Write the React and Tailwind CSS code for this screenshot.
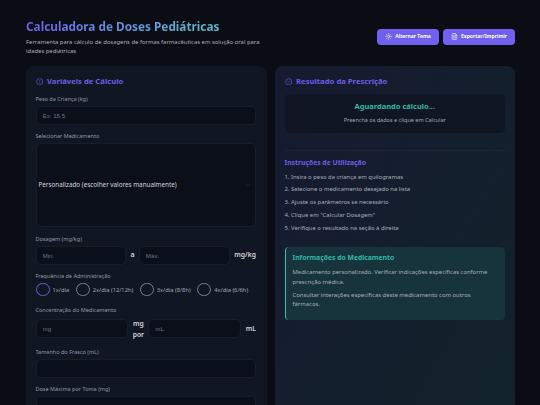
import React from "react";
import { Sun, FileText, Info, CircleCheck, ChevronDown } from "lucide-react";

const inputCls = "min-w-0 h-[19px] rounded-[5px] bg-[#0b0f19] border border-[#171d2a] px-[6px] text-[6.2px] font-['Liberation_Sans',sans-serif] text-[#d1d5db] placeholder:text-[#6b7280] outline-none";

function Label({ children, className = "" }) {
  return <div className={`text-[5.5px] leading-[8px] text-[#9199a6] mb-[3px] ${className}`}>{children}</div>;
}

function Radio({ label, active }) {
  return (
    <div className="flex items-center gap-[3px]">
      <span className={`w-[14px] h-[13px] rounded-full shrink-0 ${active ? "border-[1.5px] border-[#6d5ce7]" : "border border-[#7b8290]"}`} />
      <span className="text-[5.75px] leading-[8px] text-[#a1a7b3] whitespace-nowrap">{label}</span>
    </div>
  );
}

const steps = [
  "1. Insira o peso da criança em quilogramas",
  "2. Selecione o medicamento desejado na lista",
  "3. Ajuste os parâmetros se necessário",
  '4. Clique em "Calcular Dosagem"',
  "5. Verifique o resultado na seção à direita",
];

export default function App() {
  return (
    <div className="antialiased font-['Noto_Sans',sans-serif] h-[405px] overflow-hidden bg-[#0a0d14] pl-[26px] pt-[17px]">
      <header className="w-[489px] flex items-center justify-between">
        <div className="w-[240px]">
          <h1 className="text-[11.8px] leading-[18px] font-bold bg-gradient-to-r from-[#6d5ce7] to-[#4fd1c5] bg-clip-text text-transparent whitespace-nowrap">Calculadora de Doses Pediátricas</h1>
          <p className="mt-[3px] text-[5.9px] leading-[9.3px] text-[#a8aeb9]">Ferramenta para cálculo de dosagens de formas farmacêuticas em solução oral para idades pediátricas</p>
        </div>
        <div className="flex gap-[4px]">
          <button className="h-[15.5px] w-[62px] rounded-[4px] bg-[#7060ee] text-white text-[5px] font-bold flex items-center justify-center gap-[3px]"><Sun size={7} />Alternar Tema</button>
          <button className="h-[15.5px] w-[72px] rounded-[4px] bg-[#7060ee] text-white text-[5px] font-bold flex items-center justify-center gap-[3px]"><FileText size={7} />Exportar/Imprimir</button>
        </div>
      </header>

      <main className="mt-[9px] w-[489px] grid grid-cols-2 gap-[8px] items-start">
        <section className="h-[400px] rounded-[8px] bg-[#111722] pl-[9.5px] pr-[10.5px] pt-[11px]">
          <div className="flex items-center gap-[4px] h-[10px] text-[#6d5ce7] text-[7.7px] font-bold">
            <Info size={7.5} className="shrink-0" />Variáveis de Cálculo
          </div>

          <Label className="mt-[8px]">Peso da Criança (kg)</Label>
          <input className={`${inputCls} w-full block`} placeholder="Ex: 15.5" />

          <Label className="mt-[7.5px]">Selecionar Medicamento</Label>
          <div className="h-[84px] rounded-[5px] bg-[#0b0f19] border border-[#171d2a] pl-[2px] pr-[4px] flex items-center justify-between">
            <span className="text-[6.3px] text-[#d1d5db]">Personalizado (escolher valores manualmente)</span>
            <ChevronDown size={6} className="text-[#2c3341]" />
          </div>

          <Label className="mt-[7.5px]">Dosagem (mg/kg)</Label>
          <div className="flex items-center">
            <input className={`${inputCls} w-[91.5px]`} placeholder="Min." />
            <span className="w-[12.5px] text-center text-[7px] font-semibold text-[#d1d5db]">a</span>
            <input className={`${inputCls} w-[91.5px]`} placeholder="Máx." />
            <span className="ml-[4.5px] text-[6.8px] font-semibold text-[#d1d5db]">mg/kg</span>
          </div>

          <Label className="mt-[7.5px]">Frequência de Administração</Label>
          <div className="flex items-center gap-[6.5px] h-[13px]">
            <Radio active label="1x/dia" />
            <Radio label="2x/dia (12/12h)" />
            <Radio label="3x/dia (8/8h)" />
            <Radio label="4x/dia (6/6h)" />
          </div>

          <Label className="mt-[9.5px] mb-[4px]">Concentração do Medicamento</Label>
          <div className="flex items-center">
            <input className={`${inputCls} w-[93px]`} placeholder="mg" />
            <span className="w-[20px] text-center text-[6.8px] leading-[11px] font-semibold text-[#d1d5db]">mg por</span>
            <input className={`${inputCls} w-[93px]`} placeholder="mL" />
            <span className="ml-[4.5px] text-[6.8px] font-semibold text-[#d1d5db]">mL</span>
          </div>

          <Label className="mt-[8.3px]">Tamanho do Frasco (mL)</Label>
          <input className={`${inputCls} w-full block`} />

          <Label className="mt-[7.5px]">Dose Máxima por Toma (mg)</Label>
          <input className={`${inputCls} w-full block`} />
        </section>

        <section className="h-[400px] rounded-[8px] bg-gradient-to-br from-[#161a30] to-[#11232a] px-[10px] pt-[11px]">
          <div className="flex items-center gap-[4px] h-[10px] text-[#6d5ce7] text-[7.7px] font-bold">
            <CircleCheck size={7.5} className="shrink-0" />Resultado da Prescrição
          </div>

          <div className="mt-[7.3px] h-[38.7px] rounded-[5px] bg-[#0a0d14]/40 flex flex-col items-center justify-center gap-[5px]">
            <div className="text-[7.5px] leading-[9px] font-bold text-[#2fb8a6]">Aguardando cálculo...</div>
            <div className="text-[5.5px] leading-[8px] text-[#a1a7b3]">Preencha os dados e clique em Calcular</div>
          </div>

          <div className="mt-[17px] h-px bg-[#1c2436]" />

          <h2 className="mt-[7px] text-[6.8px] leading-[10px] font-bold text-[#6d5ce7]">Instruções de Utilização</h2>
          <ol className="mt-[3px] text-[5.9px] leading-[12.8px] text-[#a8aeb9]">
            {steps.map((s) => <li key={s}>{s}</li>)}
          </ol>

          <div className="mt-[12.4px] h-[72.7px] rounded-[4px] border-l-[1.5px] border-[#2fc4b2] bg-[#17343c] pl-[7px] pr-[8px] pt-[6.4px]">
            <h3 className="text-[6.8px] leading-[10px] font-bold text-[#2fb8a6]">Informações do Medicamento</h3>
            <p className="mt-[4.9px] text-[5.9px] leading-[9.4px] text-[#a8aeb9]">Medicamento personalizado. Verificar indicações específicas conforme prescrição médica.</p>
            <p className="mt-[3.6px] text-[5.9px] leading-[9.4px] text-[#a8aeb9]">Consultar interações específicas deste medicamento com outros fármacos.</p>
          </div>
        </section>
      </main>
    </div>
  );
}
